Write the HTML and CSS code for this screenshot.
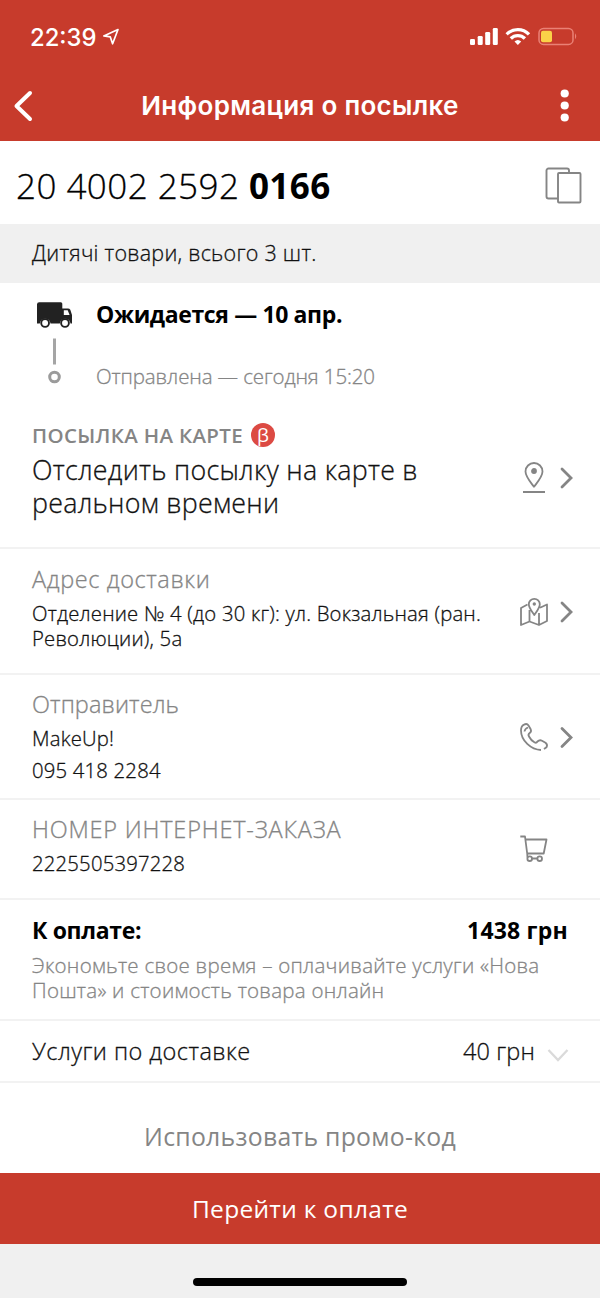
FILE: index.html
```html
<!DOCTYPE html>
<html lang="ru">
<head>
<meta charset="utf-8">
<title>Информация о посылке</title>
<link rel="stylesheet" href="styles.css">
</head>
<body>
<header class="header">
  <div class="statusbar">
    <span class="time">22:39</span>
    <svg class="location" width="18" height="18" viewBox="0 0 18 18"><path d="M16 1.5 1.8 7.9 8.3 8.9 10.6 15.8Z" fill="none" stroke="#fff" stroke-width="1.7" stroke-linejoin="round"/></svg>
    <svg class="signals" width="110" height="20" viewBox="0 0 110 20">
      <g fill="#fff"><rect x="2" y="12" width="5" height="6" rx="1.3"/><rect x="9.7" y="9" width="5" height="9" rx="1.3"/><rect x="17.2" y="5" width="5" height="13" rx="1.3"/><rect x="24.8" y="1" width="5" height="17" rx="1.3"/></g>
      <g fill="none" stroke="#fff" stroke-width="3.3"><path d="M38.7 7.3a15.5 15.5 0 0 1 22.3 0"/><path d="M42.8 11.5a10 10 0 0 1 14.1 0"/></g>
      <path d="M46.5 14.6a5 5 0 0 1 6.7 0L49.85 18Z" fill="#fff"/>
      <rect x="71" y="1.4" width="34" height="16" rx="4.5" fill="none" stroke="#ea8175" stroke-width="1.5"/>
      <rect x="73" y="3.7" width="11" height="11.5" rx="2" fill="#fbd148"/>
      <path d="M107 6.3q2.5 3 0 6Z" fill="#ea8175"/>
    </svg>
  </div>
  <nav class="navbar">
    <svg width="42" height="34" viewBox="0 0 42 34"><path d="M30 4 16.5 17 30 30" fill="none" stroke="#fff" stroke-width="4" stroke-linecap="round" stroke-linejoin="round"/></svg>
    <h1 class="title">Информация о посылке</h1>
    <svg width="42" height="34" viewBox="0 0 42 34" fill="#fff"><circle cx="20.7" cy="4.5" r="4.1"/><circle cx="20.7" cy="16.5" r="4.1"/><circle cx="20.7" cy="28.5" r="4.1"/></svg>
  </nav>
</header>

<div class="number">
  <span class="digits">20 4002 2592 <b class="tail">0166</b></span>
  <svg class="copy" width="38" height="38" viewBox="0 0 38 38" fill="#fff" stroke="#858585" stroke-width="1.9"><rect x="2.5" y="1.5" width="22.5" height="30" rx="2"/><rect x="14" y="6" width="22.5" height="29.5" rx="1"/></svg>
</div>
<div class="contents">Дитячі товари, всього 3 шт.</div>

<section class="timeline">
  <svg width="64" height="126" viewBox="0 0 64 126">
    <path d="M5 21.5q0-2.2 2.2-2.2H28.8q1.5 0 1.5 1.5V25.500H36q1.500 0 2.300 1.200L40 32V40.500H38.500A5.400 5.400 0 0 0 27.800 40.500H18.500A5.400 5.400 0 0 0 7.800 40.500H5Z" fill="#222"/>
    <path d="M31.800 27.200H35.700L37.600 32H31.800Z" fill="#fff"/>
    <g fill="#fff" stroke="#222" stroke-width="1.9"><circle cx="13.1" cy="40" r="3.9"/><circle cx="33" cy="40" r="3.9"/></g>
    <path d="M22.500 55.500V81.500" stroke="#a5a5a5" stroke-width="3"/>
    <circle cx="22.5" cy="94" r="4.8" fill="none" stroke="#9b9b9b" stroke-width="3"/>
  </svg>
  <div>
    <div class="expected">Ожидается — 10 апр.</div>
    <div class="sent">Отправлена — сегодня 15:20</div>
  </div>
</section>

<section class="row track">
  <div class="info">
    <div class="overline">ПОСЫЛКА НА КАРТЕ <span class="beta">β</span></div>
    <div class="lead">Отследить посылку на карте в<br>реальном времени</div>
  </div>
  <svg class="icon" width="34" height="34" viewBox="0 0 34 34"><path d="M17 25.800C13 20.500 8.500 15.500 8.500 10.500A8.500 8.500 0 0 1 25.500 10.500C25.500 15.500 21 20.500 17 25.800ZM6 31H28"/><circle cx="17" cy="10" r="2" class="solid"/></svg>
  <svg class="chevron" width="14" height="24" viewBox="0 0 14 24"><path d="M2 3 11 12 2 21"/></svg>
</section>

<section class="row address">
  <div class="info">
    <div class="label delivery">Адрес доставки</div>
    <div class="body">Отделение № 4 (до 30 кг): ул. Вокзальная (ран.<br>Революции), 5а</div>
  </div>
  <svg class="icon" width="34" height="34" viewBox="0 0 34 34"><path d="M10.500 10.500 4 14V31L12.500 27.500 22 31 30 27V10.500L23 13.800M12.500 16V27.500M22 19V31M17.300 21C15 17.500 11.800 14 11.800 10.300A5.500 5.500 0 0 1 22.800 10.300C22.800 14 19.600 17.500 17.300 21Z"/><circle cx="17.3" cy="10" r="0.8" class="solid"/></svg>
  <svg class="chevron" width="14" height="24" viewBox="0 0 14 24"><path d="M2 4 11 13 2 22"/></svg>
</section>

<section class="row sender">
  <div class="info">
    <div class="label from">Отправитель</div>
    <div class="body roomy">MakeUp!<br>095 418 2284</div>
  </div>
  <svg class="icon" width="34" height="34" viewBox="0 0 34 34"><path d="M24 30C14 29.800 4 20.500 4 10.500Q4 6 7 4.600Q10 3 11.500 5.500L13.700 9.300Q14.700 11.500 12.700 13Q10.700 14.500 12 16.500Q14 20.500 17.700 22.500Q19.400 23.400 20.500 21.500Q22.500 19.500 25 20.700L28.500 22.700Q31 24.700 29.500 27.200L27 29M7.500 11.500Q7.800 8.800 11 7.500"/></svg>
  <svg class="chevron" width="14" height="24" viewBox="0 0 14 24"><path d="M2 3.500 11 12.500 2 21.500"/></svg>
</section>

<section class="row order">
  <div class="info">
    <div class="label shop">НОМЕР ИНТЕРНЕТ-ЗАКАЗА</div>
    <div class="body">2225505397228</div>
  </div>
  <svg class="icon solo" width="34" height="34" viewBox="0 0 34 34"><path d="M3.300 4.500H8L10.200 21.500 10.500 25.500M8.500 7.500H29.500L26.700 21.500H10.200M14.500 26.500H20.500"/><circle cx="12.7" cy="26.7" r="2.3"/><circle cx="22.7" cy="26.7" r="2.3"/></svg>
</section>

<section class="payment">
  <div class="total"><span class="due">К оплате:</span><span class="sum">1438 грн</span></div>
  <div class="note">Экономьте свое время – оплачивайте услуги «Нова<br>Пошта» и стоимость товара онлайн</div>
</section>

<section class="services">
  <span class="service">Услуги по доставке</span>
  <span class="fee">40 грн</span>
  <svg width="24" height="16" viewBox="0 0 24 16"><path d="M2.500 3 12 13 21.500 3" fill="none" stroke="#dadada" stroke-width="2.3"/></svg>
</section>

<div class="promo">Использовать промо-код</div>
<div class="pay">Перейти к оплате</div>
<footer class="footer"><div class="home"></div></footer>
</body>
</html>
```
FILE: styles.css
```css
* { box-sizing: border-box; }
body {
  margin: 0;
  width: 600px;
  height: 1298px;
  overflow: hidden;
  background: #fff;
  color: #111;
  font-family: "Open Sans", "Noto Sans", sans-serif;
  font-weight: 300;
  white-space: nowrap;
}
svg { display: block; flex: none; }

/* Slightly heavier strokes for the light text */
.digits, .contents, .sent, .lead, .label, .body, .note, .service, .fee { -webkit-text-stroke: 0.3px currentColor; }

.header { height: 141px; background: #c73b2c; color: #fff; font-family: Inter, sans-serif; }
.statusbar { height: 72px; padding: 2px 22px 0 30px; display: flex; align-items: center; }
.time { font-size: 23.8px; font-weight: 500; }
.location { margin-left: 6px; }
.signals { margin-left: auto; }
.navbar { height: 68px; padding: 0 14px 0 0; display: flex; align-items: center; justify-content: space-between; }
.title { margin: 0 0 0 14px; font-size: 26px; font-weight: 600; line-height: 34px; letter-spacing: 0.3px; }

.number { height: 83px; padding: 3px 18px 0 16px; display: flex; align-items: center; justify-content: space-between; }
.digits { padding-top: 2px; font-size: 35px; color: #000; letter-spacing: 0.45px; }
.tail { font-weight: 700; -webkit-text-stroke: 0; }
.copy { margin-top: 4px; }
.contents { height: 59px; padding-left: 32px; background: #f0f0f0; font-size: 21.5px; line-height: 57px; letter-spacing: 0.25px; }

.timeline { height: 126px; padding-left: 32px; display: flex; }
.expected { height: 60px; font-size: 23px; font-weight: 700; line-height: 62px; letter-spacing: -0.37px; color: #000; }
.sent { font-size: 20.5px; line-height: 67px; letter-spacing: -0.12px; color: #858585; }

.row { display: flex; align-items: center; padding: 0 26px 0 32px; border-bottom: 2px solid #f2f2f2; }
.info { flex: 1; align-self: flex-start; }
.icon { fill: none; stroke: #858585; stroke-width: 1.8; stroke-linejoin: round; margin-right: 9px; }
.solo { margin-right: 23px; }
.solid { fill: #858585; }
.chevron { fill: none; stroke: #858585; stroke-width: 2.8; stroke-linecap: round; }

.track { height: 140px; }
.track .info { padding-top: 13px; }
.overline { display: flex; align-items: center; gap: 8px; height: 26px; font-size: 20.5px; font-weight: 600; line-height: 25px; letter-spacing: 0.33px; color: #858585; }
.beta { width: 24px; height: 24px; border-radius: 50%; background: #dc4a43; color: #fff; font-size: 19px; font-weight: 400; line-height: 24px; letter-spacing: 0; text-align: center; }
.lead { margin-top: 5px; font-size: 26.8px; line-height: 33px; letter-spacing: 0.27px; }

.address { height: 126px; }
.sender { height: 125px; }
.order { height: 100px; }
.address .info { padding-top: 15px; }
.sender .info, .order .info { padding-top: 14px; }
.label { font-size: 23.5px; line-height: 30px; color: #858585; }
.delivery { letter-spacing: 0.6px; }
.from { letter-spacing: 0.1px; }
.shop { letter-spacing: 0.8px; }
.body { margin-top: 7px; font-size: 20.3px; line-height: 24.5px; letter-spacing: 0.2px; }
.roomy { margin-top: 4px; line-height: 31.5px; }

.payment { height: 121px; padding: 15px 32px 0; border-bottom: 2px solid #f2f2f2; }
.total { display: flex; justify-content: space-between; font-size: 23px; font-weight: 700; line-height: 30px; color: #000; }
.due { letter-spacing: -0.35px; }
.sum { letter-spacing: 0.2px; }
.note { margin-top: 8px; font-size: 20.5px; line-height: 24.5px; letter-spacing: 0.25px; color: #858585; }

.services { height: 62px; padding: 0 30px 0 32px; display: flex; align-items: center; border-bottom: 2px solid #f2f2f2; font-size: 23.5px; line-height: 30px; }
.service { letter-spacing: 0.46px; }
.fee { margin: 0 11px 0 auto; letter-spacing: 0.15px; }
.services svg { margin-top: 8px; }

.promo { height: 90px; padding-top: 17px; text-align: center; font-size: 24.8px; font-weight: 400; line-height: 73px; letter-spacing: 0.27px; color: #858585; }
.pay { height: 71px; background: #c73b2c; color: #fff; text-align: center; font-size: 24.5px; font-weight: 400; line-height: 71px; letter-spacing: 0.3px; }
.footer { height: 54px; padding-top: 34px; background: #f0f0f0; }
.home { width: 214px; height: 8px; margin: 0 auto; border-radius: 4px; background: #000; }
```
